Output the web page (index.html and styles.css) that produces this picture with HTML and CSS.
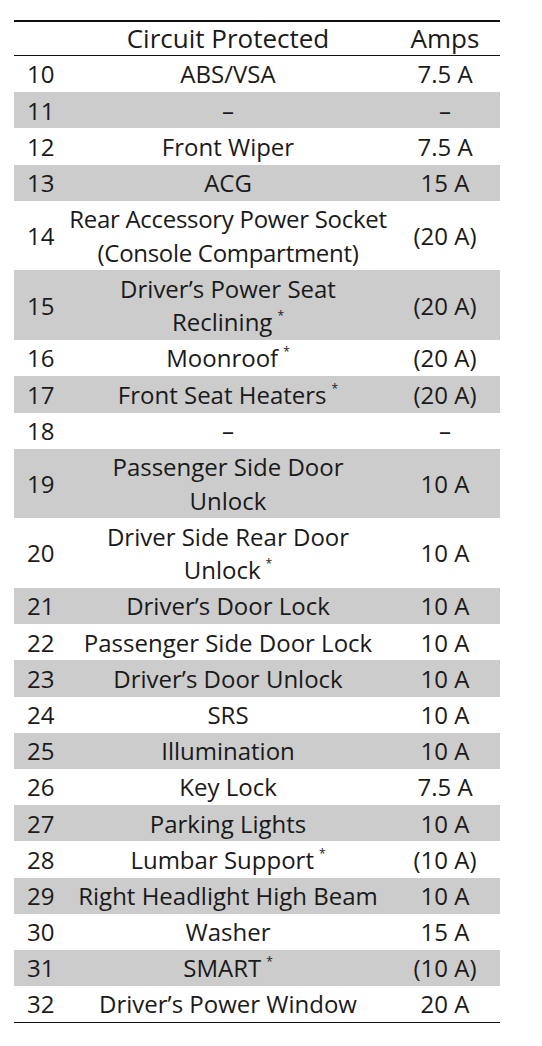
FILE: index.html
```html
<!DOCTYPE html>
<html>
<head>
<meta charset="utf-8">
<link rel="stylesheet" href="styles.css">
</head>
<body>
<table class="fuse">
  <colgroup><col class="c-num"><col class="c-circ"><col class="c-amp"></colgroup>
  <thead>
    <tr><th></th><th>Circuit Protected</th><th>Amps</th></tr>
  </thead>
  <tbody>
    <tr><td>10</td><td>ABS/VSA</td><td>7.5 A</td></tr>
    <tr class="g"><td>11</td><td>–</td><td>–</td></tr>
    <tr><td>12</td><td>Front Wiper</td><td>7.5 A</td></tr>
    <tr class="g"><td>13</td><td>ACG</td><td>15 A</td></tr>
    <tr><td>14</td><td><div class="wide"><span>Rear Accessory Power Socket<br>(Console Compartment)</span></div></td><td>(20 A)</td></tr>
    <tr class="g"><td>15</td><td>Driver’s Power Seat<br>Reclining<sup>*</sup></td><td>(20 A)</td></tr>
    <tr><td>16</td><td>Moonroof<sup>*</sup></td><td>(20 A)</td></tr>
    <tr class="g"><td>17</td><td>Front Seat Heaters<sup>*</sup></td><td>(20 A)</td></tr>
    <tr><td>18</td><td>–</td><td>–</td></tr>
    <tr class="g"><td>19</td><td>Passenger Side Door<br>Unlock</td><td>10 A</td></tr>
    <tr><td>20</td><td>Driver Side Rear Door<br>Unlock<sup>*</sup></td><td>10 A</td></tr>
    <tr class="g"><td>21</td><td>Driver’s Door Lock</td><td>10 A</td></tr>
    <tr><td>22</td><td>Passenger Side Door Lock</td><td>10 A</td></tr>
    <tr class="g"><td>23</td><td>Driver’s Door Unlock</td><td>10 A</td></tr>
    <tr><td>24</td><td>SRS</td><td>10 A</td></tr>
    <tr class="g"><td>25</td><td>Illumination</td><td>10 A</td></tr>
    <tr><td>26</td><td>Key Lock</td><td>7.5 A</td></tr>
    <tr class="g"><td>27</td><td>Parking Lights</td><td>10 A</td></tr>
    <tr><td>28</td><td>Lumbar Support<sup>*</sup></td><td>(10 A)</td></tr>
    <tr class="g"><td>29</td><td>Right Headlight High Beam</td><td>10 A</td></tr>
    <tr><td>30</td><td>Washer</td><td>15 A</td></tr>
    <tr class="g"><td>31</td><td>SMART<sup>*</sup></td><td>(10 A)</td></tr>
    <tr class="last"><td>32</td><td>Driver’s Power Window</td><td>20 A</td></tr>
  </tbody>
</table>
</body>
</html>
```

FILE: styles.css
```css
html, body {
  margin: 0;
  padding: 0;
  background: #ffffff;
}
body {
  font-family: "Open Sans", "Noto Sans", sans-serif;
  color: #1a1a1a;
}
.fuse {
  margin: 20px 0 0 14px;
  width: 486px;
  border-collapse: collapse;
  table-layout: fixed;
  font-size: 24px;
  font-weight: 400;
  line-height: 33.5px;
}
.c-num { width: 52px; }
.c-circ { width: 324px; }
.c-amp { width: 110px; }
.fuse th {
  font-weight: 400;
  font-size: 26px;
  line-height: 33px;
  text-align: center;
  height: 33px;
  padding: 0;
  border-top: 2px solid #111;
  border-bottom: 1.5px solid #111;
}
.fuse td {
  padding: 1.35px 0;
  text-align: center;
  vertical-align: middle;
  white-space: nowrap;
}
.fuse td:first-child {
  text-align: left;
  padding-left: 13px;
}
.wide {
  display: flex;
  justify-content: center;
  letter-spacing: -0.3px;
}
.fuse tr.g td {
  background: #cccccc;
}
.fuse tr.last td {
  border-bottom: 1px solid #111;
}
.fuse sup {
  font-size: 12px;
  line-height: 0;
  vertical-align: 11px;
  margin-left: 5px;
}
```
